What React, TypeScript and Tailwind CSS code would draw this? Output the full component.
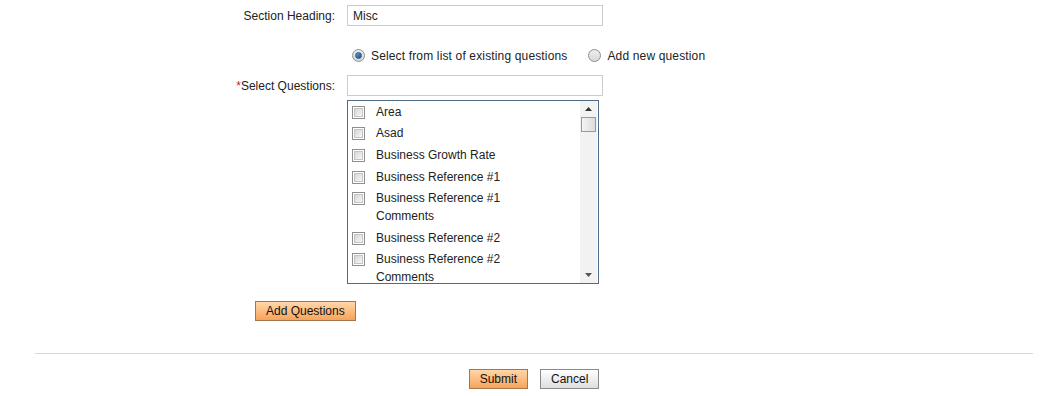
import React from "react";

const questions: { id: number; label: string }[] = [
  { id: 1, label: "Area" },
  { id: 2, label: "Asad" },
  { id: 3, label: "Business Growth Rate" },
  { id: 4, label: "Business Reference #1" },
  { id: 5, label: "Business Reference #1 Comments" },
  { id: 6, label: "Business Reference #2" },
  { id: 7, label: "Business Reference #2 Comments" },
  { id: 8, label: "Business Reference #3" },
];

const Radio = ({ checked }: { checked?: boolean }) => (
  <span className="w-[13px] h-[13px] rounded-full border border-[#8e8f8f] bg-gradient-to-b from-[#eeeeee] to-[#d8d8d8] flex items-center justify-center shrink-0">
    {checked && (
      <span className="block w-[7px] h-[7px] rounded-full bg-gradient-to-br from-[#5fa8e0] to-[#1a4c80] border border-[#2a5a8a]" />
    )}
  </span>
);

const CheckBox = () => (
  <span className="block w-[13px] h-[13px] border border-[#8f8f8f] bg-white p-[1px] shrink-0">
    <span className="block w-full h-full bg-gradient-to-br from-[#d6d6d6] to-[#f8f8f8] border border-[#c4c4c4]" />
  </span>
);

const OrangeButton = ({ children }: { children: React.ReactNode }) => (
  <button className="h-[20px] px-[10px] border border-[#a8754a] bg-gradient-to-b from-[#ffd6a8] to-[#f7a35a] text-[12px] leading-none text-[#111]">
    {children}
  </button>
);

export default function App() {
  return (
    <div
      className="w-[1055px] h-[396px] bg-white text-[12px] text-[#222] overflow-hidden"
      style={{ fontFamily: '"Liberation Sans", Arial, sans-serif' }}
    >
      <div className="flex items-center pt-[5px]">
        <div className="w-[335px] text-right">Section Heading:</div>
        <input
          className="ml-[12px] w-[256px] h-[21px] border border-[#cccccc] px-[5px] text-[12px] outline-none"
          defaultValue="Misc"
        />
      </div>

      <div className="flex items-center ml-[352px] mt-[22px] h-[15px]">
        <Radio checked />
        <span className="ml-[6px] tracking-[0.15px]">Select from list of existing questions</span>
        <span className="ml-[21px]">
          <Radio />
        </span>
        <span className="ml-[6px] tracking-[0.15px]">Add new question</span>
      </div>

      <div className="flex items-center mt-[12px]">
        <div className="w-[335px] text-right">
          <span className="text-[#d02020]">*</span>Select Questions:
        </div>
        <input className="ml-[12px] w-[256px] h-[21px] border border-[#cccccc] px-[5px] outline-none" />
      </div>

      <div className="ml-[347px] mt-[4px] w-[252px] h-[184px] border border-[#4d6a86] flex overflow-hidden">
        <div className="flex-1 overflow-hidden">
          {questions.map((q) => (
            <div key={q.id} className="flex items-start pl-[4px] py-[1.8px]">
              <span className="block mt-[3px]">
                <CheckBox />
              </span>
              <span className="ml-[11px] w-[150px] leading-[18px]">{q.label}</span>
            </div>
          ))}
        </div>
        <div className="w-[17px] bg-[#f2f2f2] flex flex-col items-center mr-[1px]">
          <svg width="9" height="14" viewBox="0 0 9 14" className="mt-[1px]">
            <path d="M1 9 L4.5 5 L8 9 Z" fill="#333" />
          </svg>
          <div className="w-[15px] h-[15px] mt-[1px] border border-[#999] bg-gradient-to-r from-[#f4f4f4] to-[#dcdcdc]" />
          <div className="flex-1" />
          <svg width="9" height="14" viewBox="0 0 9 14" className="mb-[1px]">
            <path d="M1 5 L4.5 9 L8 5 Z" fill="#555" />
          </svg>
        </div>
      </div>

      <div className="ml-[255px] mt-[17px]">
        <OrangeButton>Add Questions</OrangeButton>
      </div>

      <div className="ml-[35px] mr-[22px] mt-[32px] border-t border-[#d8d8dc]">
        <div className="flex justify-center gap-[12px] pt-[15px]">
          <OrangeButton>Submit</OrangeButton>
          <button className="h-[20px] px-[10px] border border-[#8a8a8a] bg-gradient-to-b from-[#ffffff] to-[#dedede] text-[12px] leading-none text-[#111]">
            Cancel
          </button>
        </div>
      </div>
    </div>
  );
}
